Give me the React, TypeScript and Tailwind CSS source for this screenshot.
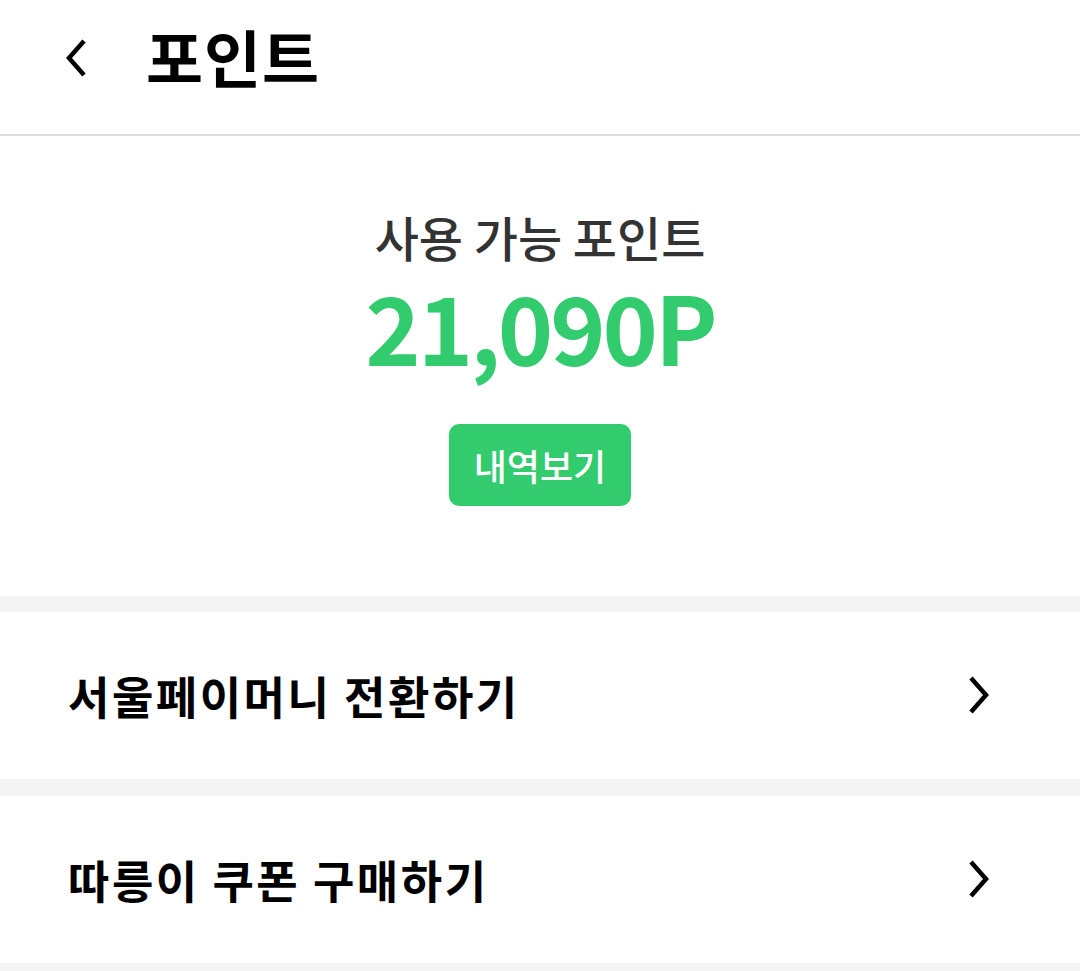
import React from 'react';

const font = { fontFamily: '"Noto Sans CJK KR", "Noto Sans", sans-serif' };

function Chevron({ dir }: { dir: 'left' | 'right' }) {
  return (
    <svg width="28" height="40" viewBox="0 0 28 40" fill="none">
      {dir === 'left' ? (
        <path d="M22 3 L7 20 L22 37" stroke="#000" strokeWidth="4.5" strokeLinecap="butt" strokeLinejoin="miter" />
      ) : (
        <path d="M5 3 L20 20 L5 37" stroke="#000" strokeWidth="4.5" strokeLinecap="butt" strokeLinejoin="miter" />
      )}
    </svg>
  );
}

const MenuRow = ({ label }: { label: string }) => (
  <div className="flex items-center justify-between h-[167px] pl-[68px] pr-[86px] bg-white">
    <span className="text-[45px] font-bold text-black tracking-[2.5px]">{label}</span>
    <Chevron dir="right" />
  </div>
);

export default function App() {
  return (
    <div className="w-[1080px] h-[971px] bg-white overflow-hidden" style={font}>
      {/* Header */}
      <div className="flex items-center h-[136px] pb-[22px] border-b-2 border-[#dcdcdc]">
        <div className="pl-[62px] pr-[56px] pt-[4px]">
          <Chevron dir="left" />
        </div>
        <h1 className="text-[62px] font-bold text-black leading-none tracking-[1px]">포인트</h1>
      </div>

      {/* Balance */}
      <div className="flex flex-col items-center pt-[72px] pb-[90px]">
        <p className="text-[48px] font-medium text-[#333] leading-[1.2]">사용 가능 포인트</p>
        <p className="mt-[8px] text-[94px] font-bold text-[#32cc6f] leading-[1.1] tracking-[-3px]">21,090P</p>
        <button className="mt-[47px] h-[82px] w-[182px] rounded-[10px] bg-[#32cc6f] text-white text-[36px] font-medium">
          내역보기
        </button>
      </div>

      <div className="h-[16px] bg-[#f4f4f4]" />
      <MenuRow label="서울페이머니 전환하기" />
      <div className="h-[17px] bg-[#f4f4f4]" />
      <MenuRow label="따릉이 쿠폰 구매하기" />
      <div className="h-[10px] bg-[#f4f4f4]" />
    </div>
  );
}
